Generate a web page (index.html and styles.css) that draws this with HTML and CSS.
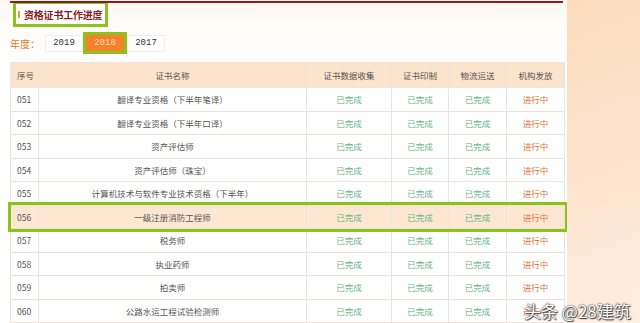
FILE: index.html
```html
<!DOCTYPE html>
<html lang="zh">
<head>
<meta charset="utf-8">
<title>资格证书工作进度</title>
<link rel="stylesheet" href="styles.css">
</head>
<body>
<div class="page">
  <div class="panel">
    <div class="topline"></div>
    <div class="title-box"><span class="bar"></span><span class="title">资格证书工作进度</span></div>
    <div class="years">
      <span class="years-label">年度：</span>
      <span class="year">2019</span>
      <span class="year current"><span class="year-inner">2018</span></span>
      <span class="year">2017</span>
    </div>
    <table class="grid">
      <colgroup>
        <col class="c-no"><col class="c-name"><col class="c-a"><col class="c-b"><col class="c-c"><col class="c-d">
      </colgroup>
      <thead>
        <tr><th>序号</th><th>证书名称</th><th>证书数据收集</th><th>证书印制</th><th>物流运送</th><th>机构发放</th></tr>
      </thead>
      <tbody>
        <tr><td>051</td><td>翻译专业资格（下半年笔译）</td><td class="done">已完成</td><td class="done">已完成</td><td class="done">已完成</td><td class="doing">进行中</td></tr>
        <tr><td>052</td><td>翻译专业资格（下半年口译）</td><td class="done">已完成</td><td class="done">已完成</td><td class="done">已完成</td><td class="doing">进行中</td></tr>
        <tr><td>053</td><td>资产评估师</td><td class="done">已完成</td><td class="done">已完成</td><td class="done">已完成</td><td class="doing">进行中</td></tr>
        <tr><td>054</td><td>资产评估师（珠宝）</td><td class="done">已完成</td><td class="done">已完成</td><td class="done">已完成</td><td class="doing">进行中</td></tr>
        <tr><td>055</td><td>计算机技术与软件专业技术资格（下半年）</td><td class="done">已完成</td><td class="done">已完成</td><td class="done">已完成</td><td class="doing">进行中</td></tr>
        <tr class="hl"><td>056</td><td>一级注册消防工程师</td><td class="done">已完成</td><td class="done">已完成</td><td class="done">已完成</td><td class="doing">进行中</td></tr>
        <tr><td>057</td><td>税务师</td><td class="done">已完成</td><td class="done">已完成</td><td class="done">已完成</td><td class="doing">进行中</td></tr>
        <tr><td>058</td><td>执业药师</td><td class="done">已完成</td><td class="done">已完成</td><td class="done">已完成</td><td class="doing">进行中</td></tr>
        <tr><td>059</td><td>拍卖师</td><td class="done">已完成</td><td class="done">已完成</td><td class="done">已完成</td><td class="doing">进行中</td></tr>
        <tr><td>060</td><td>公路水运工程试验检测师</td><td class="done">已完成</td><td class="done">已完成</td><td class="done">已完成</td><td class="doing">进行中</td></tr>
      </tbody>
    </table>
  </div>
  <div class="side"></div>
  <div class="watermark">头条 @28建筑</div>
</div>
</body>
</html>
```

FILE: styles.css
```css
html, body {
  margin: 0;
  padding: 0;
}
body {
  width: 640px;
  height: 323px;
  overflow: hidden;
  font-family: "Noto Sans CJK SC", "Noto Sans", sans-serif;
  color: #666;
}
.page {
  position: relative;
  display: flex;
  width: 640px;
  height: 323px;
  overflow: hidden;
  background: #fde4cc;
}
.panel {
  width: 557px;
  padding: 0 0 0 10px;
  background: linear-gradient(#fff8f2, #ffffff 60px, #ffffff);
  display: flex;
  flex-direction: column;
  flex-shrink: 0;
}
.side {
  flex: 1;
  background: linear-gradient(160deg, #fddcbd 0%, #fde3cc 50%, #fdeee3 100%);
}
.topline {
  height: 2px;
  margin-top: 1px;
  width: 553px;
  background: #8e1b1b;
}
.title-box {
  display: flex;
  align-items: center;
  box-sizing: border-box;
  width: 95px;
  height: 24px;
  margin-left: 3px;
  border: 3px solid #8cc21c;
  border-top-width: 1px;
  background: #fff;
  padding-left: 2px;
}
.bar {
  width: 2px;
  height: 7px;
  background: #e0a31e;
  margin-right: 4px;
}
.title {
  font-size: 10px;
  font-weight: bold;
  color: #8e1b1b;
  letter-spacing: -0.2px;
}
.years {
  display: flex;
  align-items: center;
  height: 22px;
  margin-top: 5px;
}
.years-label {
  width: 35px;
  font-size: 10px;
  color: #e07a2e;
}
.year {
  box-sizing: border-box;
  width: 38px;
  height: 17px;
  display: flex;
  align-items: center;
  justify-content: center;
  border: 1px solid #eeeeee;
  background: #fff;
  font-family: "Liberation Mono", monospace;
  font-size: 9px;
  color: #333;
}
.year.current {
  width: 44px;
  height: 22px;
  border: 3px solid #8cc21c;
  background: #fff;
  padding: 0;
}
.year-inner {
  width: 100%;
  height: 100%;
  display: flex;
  align-items: center;
  justify-content: center;
  background: #f6812a;
  color: #fbd9b8;
}
.grid {
  margin-top: 8px;
  width: 554px;
  border-collapse: collapse;
  table-layout: fixed;
  background: #fff;
}
.c-no { width: 28px; }
.c-name { width: 268px; }
.c-a { width: 85px; }
.c-b { width: 57px; }
.c-c { width: 58px; }
.c-d { width: 58px; }
.grid th, .grid td {
  border: 1px solid #ece4dc;
  font-size: 8.5px;
  font-weight: normal;
  text-align: center;
  padding: 0;
  color: #555;
  white-space: nowrap;
}
.grid th {
  height: 24px;
  background: #fce3cc;
}
.grid td {
  height: 22.5px;
}
.grid th:first-child, .grid td:first-child {
  text-align: left;
  padding-left: 6px;
}
.grid td.done {
  color: #66b386;
}
.grid td.doing {
  color: #e3733a;
}
.grid tr.hl td {
  background: #fde7d3;
}
.grid tr.hl {
  outline: 3px solid #8cc21c;
  outline-offset: 0;
}
.watermark {
  position: absolute;
  left: 524px;
  top: 298px;
  font-size: 17px;
  color: #fff;
  white-space: nowrap;
  text-shadow: 0 0 1px #333, 0 0 2px #555, 1px 1px 1px #444;
}
```
